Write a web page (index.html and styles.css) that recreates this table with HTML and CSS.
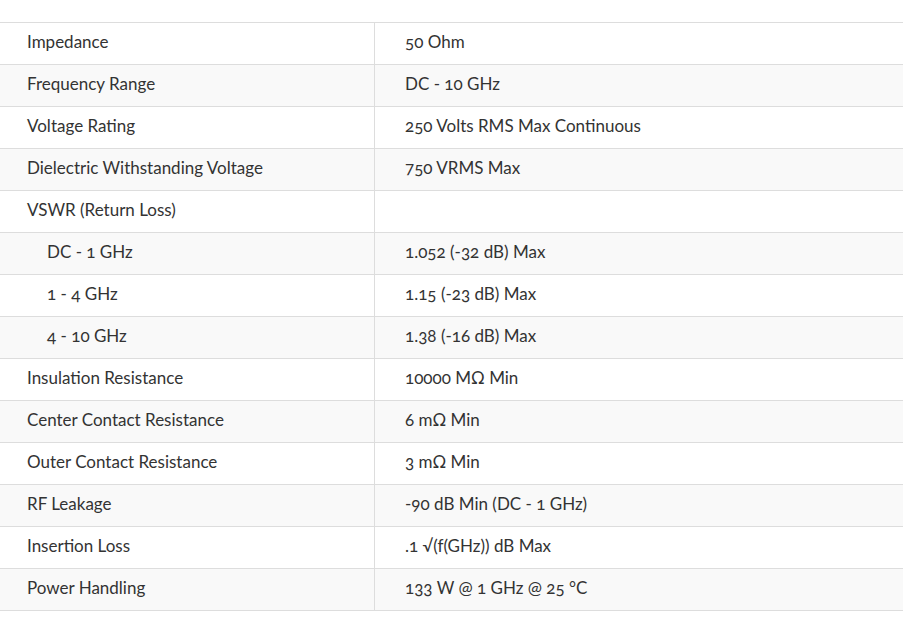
FILE: index.html
```html
<!DOCTYPE html>
<html>
<head>
<meta charset="utf-8">
<link rel="stylesheet" href="styles.css">
</head>
<body>
<table class="spec">
<tbody>
<tr><td class="k">Impedance</td><td class="v">50 Ohm</td></tr>
<tr><td class="k">Frequency Range</td><td class="v">DC - 10 GHz</td></tr>
<tr><td class="k">Voltage Rating</td><td class="v">250 Volts RMS Max Continuous</td></tr>
<tr><td class="k">Dielectric Withstanding Voltage</td><td class="v">750 VRMS Max</td></tr>
<tr><td class="k">VSWR (Return Loss)</td><td class="v"></td></tr>
<tr><td class="k sub">DC - 1 GHz</td><td class="v">1.052 (-32 dB) Max</td></tr>
<tr><td class="k sub">1 - 4 GHz</td><td class="v">1.15 (-23 dB) Max</td></tr>
<tr><td class="k sub">4 - 10 GHz</td><td class="v">1.38 (-16 dB) Max</td></tr>
<tr><td class="k">Insulation Resistance</td><td class="v">10000 MΩ Min</td></tr>
<tr><td class="k">Center Contact Resistance</td><td class="v">6 mΩ Min</td></tr>
<tr><td class="k">Outer Contact Resistance</td><td class="v">3 mΩ Min</td></tr>
<tr><td class="k">RF Leakage</td><td class="v">-90 dB Min (DC - 1 GHz)</td></tr>
<tr><td class="k">Insertion Loss</td><td class="v">.1 √(f(GHz)) dB Max</td></tr>
<tr><td class="k">Power Handling</td><td class="v">133 W @ 1 GHz @ 25 °C</td></tr>
</tbody>
</table>
</body>
</html>
```
FILE: styles.css
```css
html, body {
  margin: 0;
  padding: 0;
  background: #ffffff;
}
body {
  font-family: Lato, "Noto Sans", sans-serif;
  font-size: 17px;
  color: #333333;
  font-variant-numeric: oldstyle-nums;
}
.spec {
  margin-top: 22px;
  width: 100%;
  border-collapse: separate;
  border-spacing: 0;
  border-top: 1px solid #dddddd;
}
.spec td {
  height: 38px;
  padding: 0 0 3px 0;
  border-bottom: 1px solid #dddddd;
  vertical-align: middle;
  line-height: 20px;
}
.spec tr:nth-child(even) td {
  background: #f9f9f9;
}
.k {
  width: 347px;
  padding-left: 27px !important;
  border-right: 1px solid #dddddd;
}
.k.sub {
  padding-left: 47px !important;
  width: 327px;
}
.v {
  padding-left: 30px !important;
}
```
